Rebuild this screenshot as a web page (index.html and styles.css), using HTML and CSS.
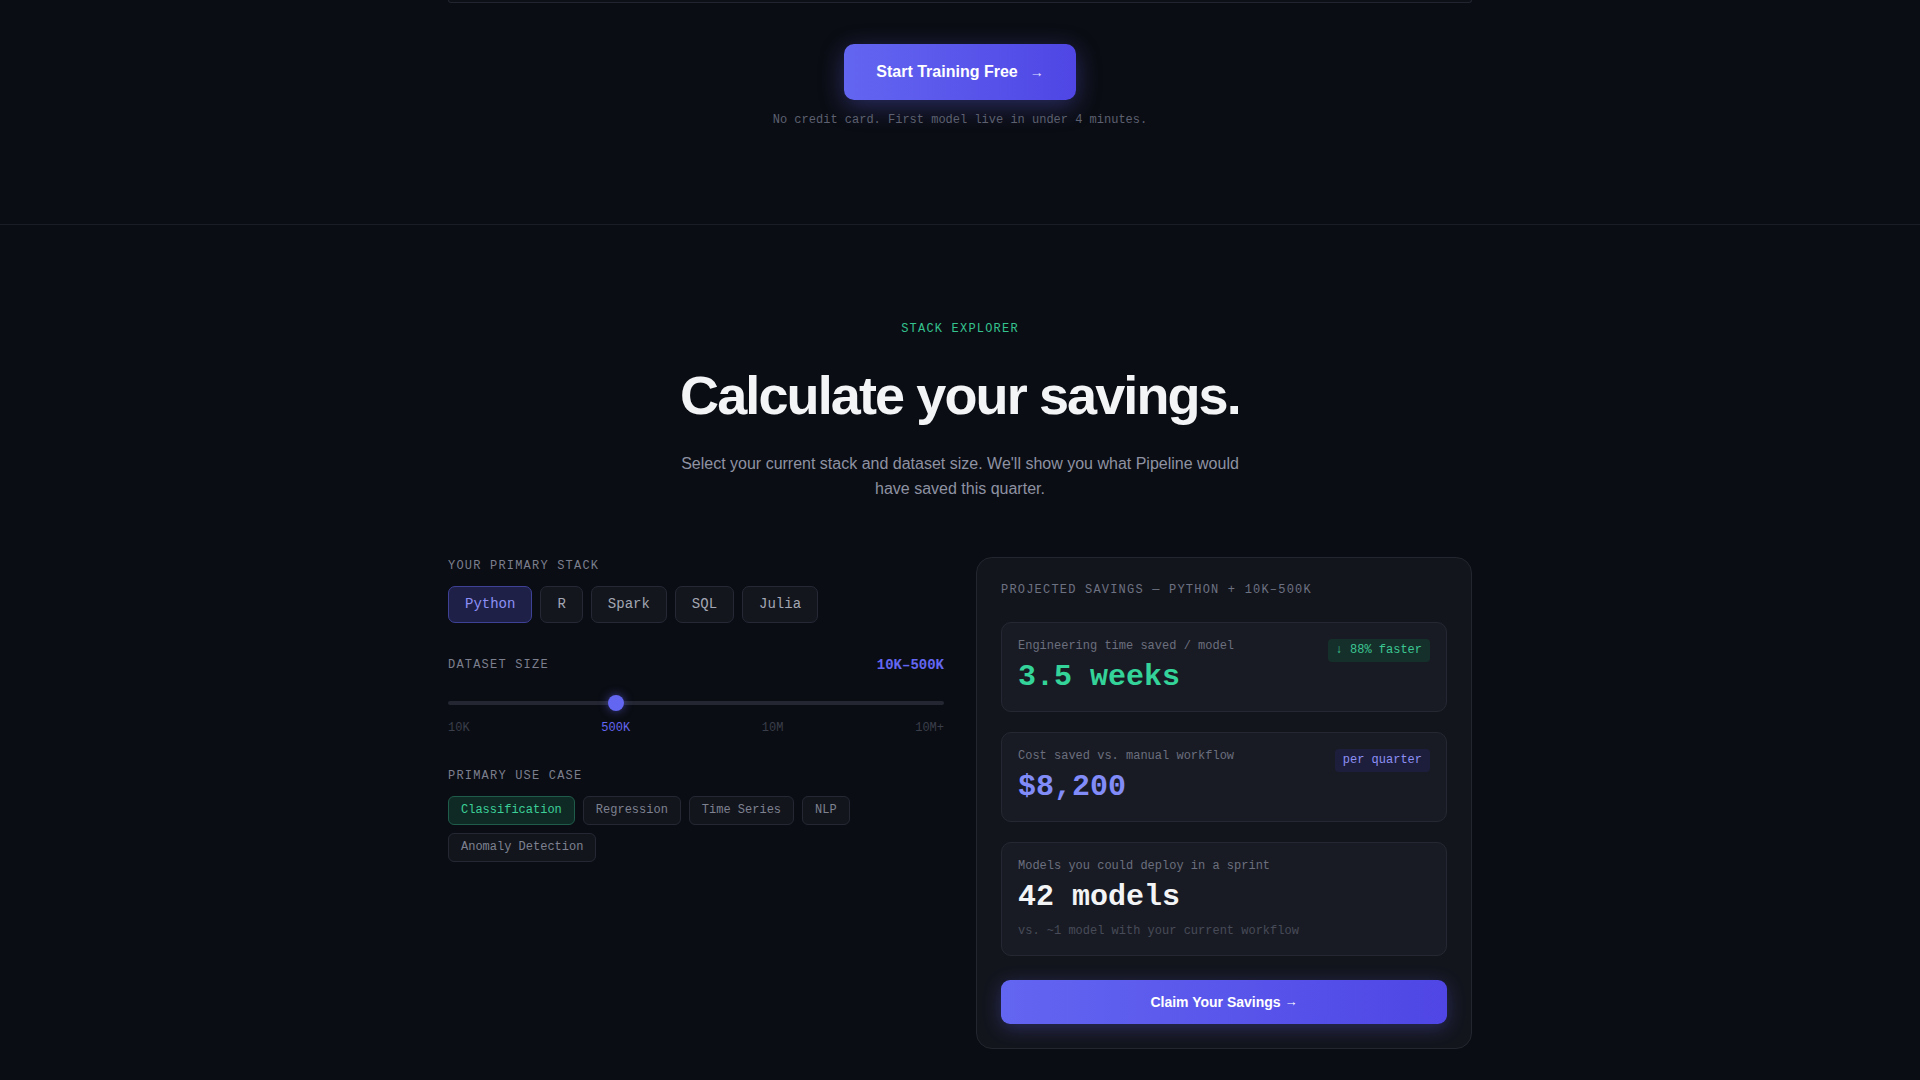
FILE: index.html
```html
<!DOCTYPE html>
<html lang="en">
<head>
<meta charset="utf-8">
<title>Pipeline — Stack Explorer</title>
<link rel="stylesheet" href="styles.css">
</head>
<body>
<section class="cta">
  <div class="demo-tail"></div>
  <a class="btn-primary" href="#">Start Training Free <span class="arrow">→</span></a>
  <p class="cta-note">No credit card. First model live in under 4 minutes.</p>
</section>

<section class="explorer">
  <p class="eyebrow">STACK EXPLORER</p>
  <h2 class="headline">Calculate your savings.</h2>
  <p class="lede">Select your current stack and dataset size. We'll show you what Pipeline would have saved this quarter.</p>

  <div class="explorer-grid">
    <div class="controls">
      <div class="group">
        <div class="label">YOUR PRIMARY STACK</div>
        <div class="chips">
          <button class="chip chip-active">Python</button>
          <button class="chip">R</button>
          <button class="chip">Spark</button>
          <button class="chip">SQL</button>
          <button class="chip">Julia</button>
        </div>
      </div>

      <div class="group">
        <div class="size-row">
          <span class="label label-inline">DATASET SIZE</span>
          <span class="size-value">10K–500K</span>
        </div>
        <div class="slider-wrap">
          <input class="slider" type="range" min="0" max="3" step="1" value="1">
        </div>
        <div class="ticks">
          <span>10K</span>
          <span class="tick-active">500K</span>
          <span>10M</span>
          <span>10M+</span>
        </div>
      </div>

      <div class="group">
        <div class="label">PRIMARY USE CASE</div>
        <div class="chips chips-sm">
          <button class="tag tag-active">Classification</button>
          <button class="tag">Regression</button>
          <button class="tag">Time Series</button>
          <button class="tag">NLP</button>
          <button class="tag">Anomaly Detection</button>
        </div>
      </div>
    </div>

    <div class="results">
      <div class="results-title">PROJECTED SAVINGS — PYTHON + 10K–500K</div>

      <div class="metric">
        <div class="metric-top">
          <div>
            <div class="metric-label">Engineering time saved / model</div>
            <div class="metric-value value-green">3.5 weeks</div>
          </div>
          <span class="badge badge-green">↓ 88% faster</span>
        </div>
      </div>

      <div class="metric">
        <div class="metric-top">
          <div>
            <div class="metric-label">Cost saved vs. manual workflow</div>
            <div class="metric-value value-indigo">$8,200</div>
          </div>
          <span class="badge badge-indigo">per quarter</span>
        </div>
      </div>

      <div class="metric">
        <div class="metric-label">Models you could deploy in a sprint</div>
        <div class="metric-value value-white">42 models</div>
        <div class="metric-sub">vs. ~1 model with your current workflow</div>
      </div>

      <a class="btn-claim" href="#">Claim Your Savings <span class="arrow-sm">→</span></a>
    </div>
  </div>
</section>
</body>
</html>
```

FILE: styles.css
```css
* {
  box-sizing: border-box;
}

html, body {
  margin: 0;
  padding: 0;
  background: #0b0d14;
  color: #e5e7eb;
  font-family: "Liberation Sans", Arial, sans-serif;
}

/* ---------- CTA tail ---------- */
.cta {
  display: flex;
  flex-direction: column;
  align-items: center;
  padding-bottom: 95px;
  border-bottom: 1px solid #1a1d26;
}

.demo-tail {
  width: 1024px;
  height: 3px;
  border: 1px solid #22252f;
  border-top: none;
  border-radius: 0 0 10px 10px;
  background: #0e1018;
}

.btn-primary {
  margin-top: 41px;
  display: inline-flex;
  align-items: center;
  height: 56px;
  padding: 0 32px;
  border-radius: 10px;
  background: linear-gradient(90deg, #6366f1 0%, #4f46e5 100%);
  box-shadow: 0 6px 24px rgba(99, 102, 241, 0.35);
  color: #ffffff;
  font-weight: 700;
  font-size: 16px;
  text-decoration: none;
}

.btn-primary .arrow {
  margin-left: 12px;
  font-weight: 400;
  font-size: 14px;
  color: #e0e1ff;
}

.cta-note {
  margin: 11px 0 0;
  font-family: "Liberation Mono", monospace;
  font-size: 12px;
  line-height: 18px;
  color: #5c6070;
}

/* ---------- Explorer ---------- */
.explorer {
  padding: 95px 0 96px;
  display: flex;
  flex-direction: column;
  align-items: center;
}

.eyebrow {
  margin: 0 0 28px;
  font-family: "Liberation Mono", monospace;
  font-size: 12px;
  line-height: 18px;
  letter-spacing: 0.1em;
  color: #34c28f;
}

.headline {
  margin: 0 0 27px;
  font-size: 54px;
  line-height: 1.1;
  font-weight: 700;
  letter-spacing: -0.035em;
  color: #f3f4f6;
}

.lede {
  margin: 0 0 55px;
  max-width: 560px;
  text-align: center;
  font-size: 16px;
  line-height: 1.55;
  color: #8e92a2;
}

.explorer-grid {
  width: 1024px;
  display: grid;
  grid-template-columns: 1fr 1fr;
  gap: 32px;
  align-items: start;
}

/* ---------- Controls ---------- */
.controls {
  display: flex;
  flex-direction: column;
  gap: 32px;
  padding-top: 1px;
}

.label {
  font-family: "Liberation Mono", monospace;
  font-size: 12px;
  line-height: 16px;
  letter-spacing: 0.1em;
  color: #7b7f8e;
  margin-bottom: 12px;
}

.label-inline {
  margin-bottom: 0;
}

.chips {
  display: flex;
  flex-wrap: wrap;
  gap: 8px;
}

.chip {
  font-family: "Liberation Mono", monospace;
  font-size: 14px;
  line-height: 17px;
  padding: 9px 16px;
  border-radius: 7px;
  border: 1px solid #262935;
  background: #14161e;
  color: #a3a7b3;
  cursor: pointer;
}

.chip-active {
  background: #1e2048;
  border-color: #3e4196;
  color: #8d90f7;
}

.size-row {
  display: flex;
  justify-content: space-between;
  align-items: center;
  height: 20px;
  margin-bottom: 20px;
}

.size-value {
  font-family: "Liberation Mono", monospace;
  font-size: 14px;
  font-weight: 700;
  color: #6366f1;
}

.slider-wrap {
  height: 16px;
  display: flex;
  align-items: center;
}

.slider {
  -webkit-appearance: none;
  appearance: none;
  width: 100%;
  height: 4px;
  margin: 0;
  border-radius: 2px;
  background: #242732;
  outline: none;
}

.slider::-webkit-slider-thumb {
  -webkit-appearance: none;
  appearance: none;
  width: 16px;
  height: 16px;
  border-radius: 50%;
  background: #6366f1;
  border: none;
  box-shadow: 0 0 10px rgba(99, 102, 241, 0.55);
}

.ticks {
  margin-top: 10px;
  display: flex;
  justify-content: space-between;
  font-family: "Liberation Mono", monospace;
  font-size: 12px;
  line-height: 15px;
  color: #3a3e4a;
}

.tick-active {
  color: #6366f1;
}

.tag {
  font-family: "Liberation Mono", monospace;
  font-size: 12px;
  line-height: 15px;
  padding: 6px 12px;
  border-radius: 6px;
  border: 1px solid #252833;
  background: #13151d;
  color: #7e8290;
  cursor: pointer;
}

.tag-active {
  background: #0f2a25;
  border-color: #1f5c4a;
  color: #3ccf98;
}

/* ---------- Results card ---------- */
.results {
  background: #13151d;
  border: 1px solid #23262f;
  border-radius: 16px;
  padding: 24px;
  display: flex;
  flex-direction: column;
}

.results-title {
  font-family: "Liberation Mono", monospace;
  font-size: 12px;
  line-height: 16px;
  letter-spacing: 0.1em;
  color: #6d7282;
  margin-bottom: 24px;
}

.metric {
  background: #191b24;
  border: 1px solid #252832;
  border-radius: 10px;
  padding: 16px;
  margin-bottom: 20px;
}

.metric:last-of-type {
  margin-bottom: 24px;
}

.metric-top {
  display: flex;
  justify-content: space-between;
  align-items: flex-start;
}

.metric-label {
  font-family: "Liberation Mono", monospace;
  font-size: 12px;
  line-height: 15px;
  color: #6b6f7e;
}

.metric-value {
  margin-top: 6px;
  font-family: "Liberation Mono", monospace;
  font-size: 30px;
  line-height: 35px;
  font-weight: 700;
}

.value-green { color: #34d399; }
.value-indigo { color: #818cf8; }
.value-white { color: #f3f4f6; }

.metric-sub {
  margin-top: 9px;
  font-family: "Liberation Mono", monospace;
  font-size: 12px;
  line-height: 15px;
  color: #474b58;
}

.badge {
  font-family: "Liberation Mono", monospace;
  font-size: 12px;
  line-height: 15px;
  padding: 4px 8px;
  border-radius: 4px;
  white-space: nowrap;
}

.badge-green {
  background: #15302a;
  color: #3cc693;
}

.badge-indigo {
  background: #1d1e3b;
  color: #8d90f5;
}

.btn-claim {
  display: flex;
  align-items: center;
  justify-content: center;
  height: 44px;
  border-radius: 9px;
  background: linear-gradient(90deg, #6366f1 0%, #4f46e5 100%);
  box-shadow: 0 4px 18px rgba(99, 102, 241, 0.3);
  color: #ffffff;
  font-size: 14px;
  font-weight: 700;
  text-decoration: none;
}

.arrow-sm {
  margin-left: 4px;
  font-weight: 400;
  font-size: 13px;
}
```
